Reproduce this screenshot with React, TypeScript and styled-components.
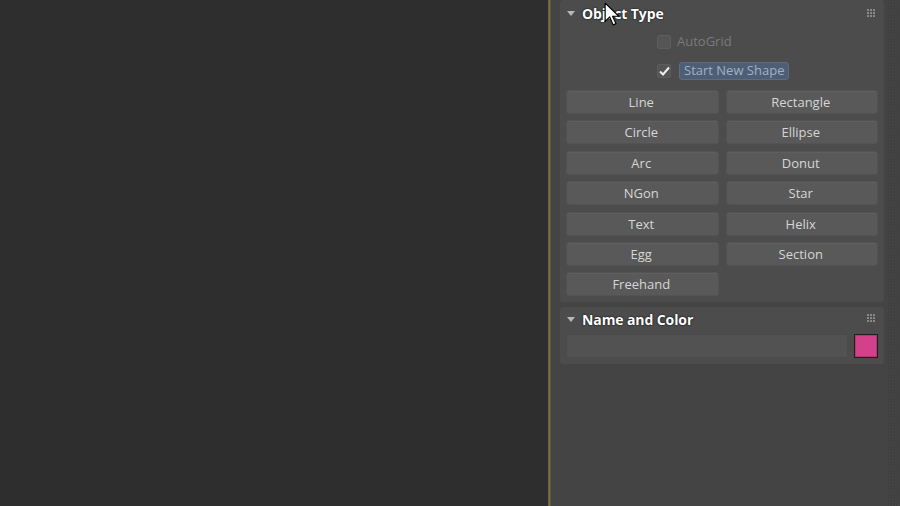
import React from 'react'
import styled, { createGlobalStyle } from 'styled-components'

const GlobalStyle = createGlobalStyle`
    html, body {
        margin: 0;
        padding: 0;
        background: #2d2d2d;
        overflow: hidden;
    }
    * {
        box-sizing: border-box;
    }
`

const Screen = styled.div`
    position: relative;
    display: flex;
    width: 900px;
    height: 506px;
    font-family: 'Open Sans', 'Noto Sans', sans-serif;
`

const Viewport = styled.div`
    width: 548px;
    background: #2e2e2e;
`

const Divider = styled.div`
    width: 3px;
    background: linear-gradient(to right, #6b5d40 0, #7e6b48 60%, #4a4438 100%);
`

const CommandPanel = styled.div`
    flex: 1;
    display: flex;
    background: #444444;
`

const RolloutStack = styled.div`
    flex: 1;
    display: flex;
    flex-direction: column;
    gap: 5px;
    padding: 0 4px 0 9px;
`

const ScrollStrip = styled.div`
    width: 12px;
    background-color: #414141;
    background-image: radial-gradient(circle, #4a4a4a 0.8px, transparent 1px);
    background-size: 3px 3px;
`

const Rollout = styled.div`
    background: #4c4c4c;
    border-radius: 3px;
    padding: 0 6px 6px;
`

const RolloutHeader = styled.div<{ $height: number }>`
    position: relative;
    display: flex;
    align-items: center;
    height: ${(p) => p.$height}px;
    padding-left: 1px;
`

const Caret = styled.span`
    width: 0;
    height: 0;
    border-left: 4px solid transparent;
    border-right: 4px solid transparent;
    border-top: 5px solid #b8b8b8;
    margin-right: 7px;
`

const RolloutTitle = styled.span`
    color: #ffffff;
    font-size: 14px;
    font-weight: 700;
    letter-spacing: -0.1px;
    text-shadow: 0 0 2px #1a1a1a, 0 0 1px #000;
`

const Grip = styled.svg`
    position: absolute;
    right: 2px;
    top: 50%;
    transform: translateY(-55%);
`

const CheckRow = styled.label<{ $disabled?: boolean }>`
    display: flex;
    align-items: center;
    height: 29px;
    padding-left: 91px;
    gap: 6px;
    color: ${(p) => (p.$disabled ? '#7a7a7a' : '#9fb2c8')};
    font-size: 13px;
    line-height: 1;
`

const Box = styled.span`
    display: inline-flex;
    align-items: center;
    justify-content: center;
    width: 14px;
    height: 14px;
    background: #555555;
    border: 1px solid #5d5d5d;
    border-radius: 2px;
`

const Highlight = styled.span`
    background: #4e5e74;
    border: 1px solid #5b6c84;
    border-radius: 3px;
    padding: 1px 4px 2px;
    margin-left: 2px;
`

const ButtonGrid = styled.div`
    display: grid;
    grid-template-columns: 1fr 1fr;
    grid-auto-rows: 24px;
    column-gap: 7px;
    row-gap: 6.4px;
    margin-top: 5px;
`

const ToolButton = styled.button`
    background: #595959;
    border: 1px solid #535353;
    border-radius: 3px;
    color: #d6d6d6;
    font-family: inherit;
    font-size: 13px;
    padding: 0 2px 0 0;
    box-shadow: inset 0 1px 0 #5f5f5f;
`

const NameRow = styled.div`
    display: flex;
    gap: 6px;
    margin-top: 3px;
`

const NameField = styled.div`
    flex: 1;
    height: 24px;
    background: #525252;
    border: 1px solid #4a4a4a;
    border-radius: 2px;
`

const Swatch = styled.div<{ $color: string }>`
    width: 24px;
    height: 24px;
    background: ${(p) => p.$color};
    border: 1px solid #1e1e1e;
    box-shadow: inset 0 0 0 1px #b23a72;
`

const Cursor = styled.svg`
    position: absolute;
    left: 604px;
    top: 2px;
`

const shapes = ['Line', 'Rectangle', 'Circle', 'Ellipse', 'Arc', 'Donut', 'NGon', 'Star', 'Text', 'Helix', 'Egg', 'Section', 'Freehand']

const GripIcon = () => (
    <Grip width="9" height="9" viewBox="0 0 9 9">
        {[0, 3, 6].map((y) =>
            [0, 3, 6].map((x) => <rect key={`${x}-${y}`} x={x} y={y} width="2" height="2" fill="#8a8a8a" />)
        )}
    </Grip>
)

export default function App(): JSX.Element {
    return (
        <>
            <GlobalStyle />
            <Screen>
                <Viewport />
                <Divider />
                <CommandPanel>
                    <RolloutStack>
                        <Rollout>
                            <RolloutHeader $height={27}>
                                <Caret />
                                <RolloutTitle>Object Type</RolloutTitle>
                                <GripIcon />
                            </RolloutHeader>
                            <CheckRow $disabled>
                                <Box />
                                AutoGrid
                            </CheckRow>
                            <CheckRow>
                                <Box>
                                    <svg width="11" height="10" viewBox="0 0 11 10">
                                        <path d="M1 5.5 L4 8.5 L10 1.5" stroke="#f0f0f0" strokeWidth="2" fill="none" />
                                    </svg>
                                </Box>
                                <Highlight>Start New Shape</Highlight>
                            </CheckRow>
                            <ButtonGrid>
                                {shapes.map((s) => (
                                    <ToolButton key={s}>{s}</ToolButton>
                                ))}
                            </ButtonGrid>
                        </Rollout>
                        <Rollout>
                            <RolloutHeader $height={24}>
                                <Caret />
                                <RolloutTitle>Name and Color</RolloutTitle>
                                <GripIcon />
                            </RolloutHeader>
                            <NameRow>
                                <NameField />
                                <Swatch $color="#d3418a" />
                            </NameRow>
                        </Rollout>
                    </RolloutStack>
                    <ScrollStrip />
                </CommandPanel>
                <Cursor width="16" height="24" viewBox="0 0 14 21">
                    <path d="M1 1 L1 17 L5 13 L8 20 L10.5 19 L7.5 12.5 L13 12.5 Z" fill="#ffffff" stroke="#000" strokeWidth="1" strokeLinejoin="round" />
                </Cursor>
            </Screen>
        </>
    )
}
